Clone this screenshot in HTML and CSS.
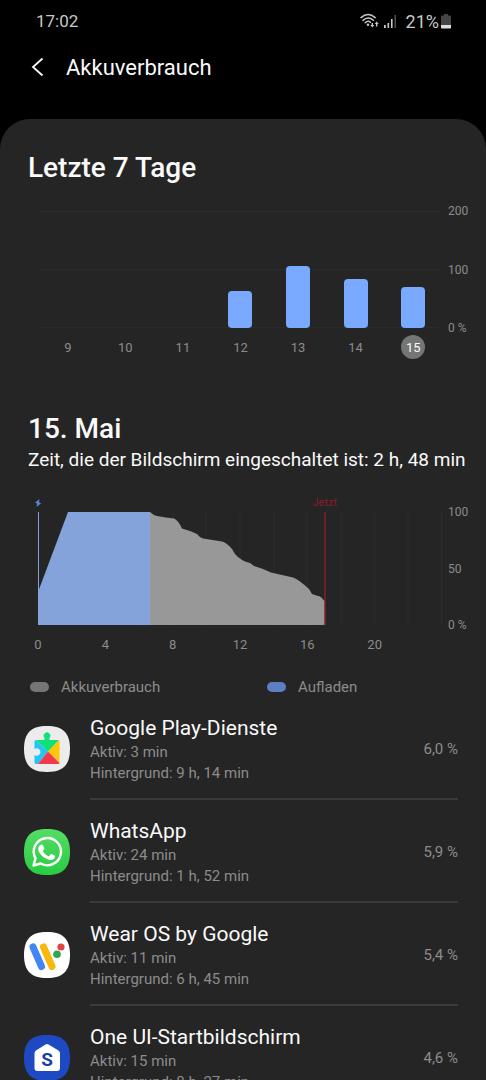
FILE: index.html
```html
<!DOCTYPE html>
<html lang="de">
<head>
<meta charset="utf-8">
<meta name="viewport" content="width=device-width, initial-scale=1">
<title>Akkuverbrauch</title>
<link rel="stylesheet" href="styles.css">
</head>
<body>
<div class="screen">
  <div class="status">
    <span class="time">17:02</span>
    <div class="status-icons">
      <svg class="wifi" viewBox="0 0 20 16" aria-hidden="true">
        <g fill="none" stroke="#c8c8c8" stroke-width="1.5" stroke-linecap="round">
          <path d="M1 4.600Q8-1.500 15.200 4.600"/>
          <path d="M3 7.400Q8 2.700 13.400 7.300"/>
          <path d="M5.200 9.700Q8 7 10.500 9.200"/>
        </g>
        <circle cx="8" cy="11.800" r="1.200" fill="#c8c8c8"/>
        <path d="M11.600 10h1.400v2h1.300l-2 2.500-2-2.500h1.300zM16 13.500v-2.500h-1.300l2-2.500 2 2.500h-1.300v2.500z" fill="#c8c8c8"/>
      </svg>
      <svg class="signal" viewBox="0 0 14 15" aria-hidden="true">
        <path d="M1 11h1.800v3H1zM4.500 9h1.600v5H4.500zM8 5h1.600v9H8z" fill="#c8c8c8"/>
        <path d="M11.500 1H13v13h-1.500z" fill="#505050"/>
      </svg>
      <span class="charge">21%</span>
      <svg class="battery" viewBox="0 0 10 15" aria-hidden="true">
        <path d="M3 0h4v1.500h2q1 0 1 1V11H0V2.500q0-1 1-1h2z" fill="#454545"/>
        <path d="M0 11h10v2.500q0 1-1 1H1q-1 0-1-1z" fill="#dedede"/>
      </svg>
    </div>
  </div>
  <header class="header">
    <button class="back" type="button" aria-label="Zurück">
      <svg viewBox="0 0 14 20" aria-hidden="true"><path d="M11.500 1.500L2 10l9.500 8.500" fill="none" stroke="#fafafa" stroke-width="1.800"/></svg>
    </button>
    <h1>Akkuverbrauch</h1>
  </header>

  <main class="panel">
    <section class="week">
      <h2>Letzte 7 Tage</h2>
      <div class="chart">
        <div class="plot week-plot">
          <div class="col"></div>
          <div class="col"></div>
          <div class="col"></div>
          <div class="col"><div class="bar" style="height:32%"></div></div>
          <div class="col"><div class="bar" style="height:53%"></div></div>
          <div class="col"><div class="bar" style="height:42%"></div></div>
          <div class="col"><div class="bar" style="height:35%"></div></div>
        </div>
        <div class="scale"><span>200</span><span>100</span><span>0 %</span></div>
        <div class="days">
          <button type="button">9</button>
          <button type="button">10</button>
          <button type="button">11</button>
          <button type="button">12</button>
          <button type="button">13</button>
          <button type="button">14</button>
          <button type="button" class="selected">15</button>
        </div>
      </div>
    </section>

    <section class="day">
      <h2>15. Mai</h2>
      <p>Zeit, die der Bildschirm eingeschaltet ist: 2 h, 48 min</p>
      <div class="chart day-chart">
        <div class="plot day-plot">
          <svg class="bolt" viewBox="0 0 8 10" aria-hidden="true"><path d="M5.500 1L1 4.700l2.200.8L2.500 9 7.200 5.200 5 4.500z" fill="#5b87d6"/></svg>
          <span class="now" style="left:71%">Jetzt</span>
          <svg class="area" viewBox="0 0 404 113" preserveAspectRatio="none" aria-hidden="true">
            <path d="M0 80L30 0H112V113H0z" fill="#83a3da"/>
            <path d="M112 0Q115 3 119 4L128 5.500L136 6.500Q140 8 144 16.500L152 19L159 22Q162 26 165 26.500L184 29.500Q188 30 194 37L197 42Q203 49 212 51L216 54L225 57L233 60.500L255 65.500Q260 67 271 77L274 82L280 84Q283 84 285 87.500L287 89V113H112z" fill="#989898"/>
            <path d="M101 0V113M135 0V113M168 0V113M202 0V113M236 0V113M269 0V113M303 0V113M337 0V113M370 0V113M403.500 0V113" stroke="#fff" stroke-opacity=".03"/>
            <path d="M.5 0V113" stroke="#83a3da"/>
            <path d="M287 0V113" stroke="#8a1c2a" stroke-width="1.500"/>
          </svg>
        </div>
        <div class="scale"><span>100</span><span>50</span><span>0 %</span></div>
        <div class="hours"><span>0</span><span>4</span><span>8</span><span>12</span><span>16</span><span>20</span></div>
      </div>
      <div class="legend">
        <span class="key usage">Akkuverbrauch</span>
        <span class="key charging">Aufladen</span>
      </div>
    </section>

    <ul class="apps">
      <li>
        <svg class="icon" viewBox="0 0 46 46" aria-hidden="true">
          <path d="M23 0C39 0 46 7 46 23S39 46 23 46 0 39 0 23 7 0 23 0z" fill="#ececec"/>
          <path d="M12 14L24 25.500 14 38h-2q-1.500 0-1.500-1.500V29a3.700 3.700 0 1 0 0-6v-7.500Q10.500 14 12 14z" fill="#22c5f4"/>
          <path d="M12 14h8.500v-2a3.300 3.300 0 1 1 5 0v2H35L24 25.500z" fill="#0fe07a"/>
          <path d="M35 14q.5 0 .5 1.500v21L24 25.500z" fill="#ffc60a"/>
          <path d="M24 25.500L35.500 37q-.3 1-1.500 1H14z" fill="#f4384c"/>
        </svg>
        <div class="row"><div class="info"><h3>Google Play-Dienste</h3><p>Aktiv: 3 min</p><p>Hintergrund: 9 h, 14 min</p></div><span class="share">6,0 %</span></div>
      </li>
      <li>
        <svg class="icon" viewBox="0 0 46 46" aria-hidden="true">
          <defs><linearGradient id="wa" x2="0" y2="1"><stop stop-color="#55dc65"/><stop offset="1" stop-color="#28cc43"/></linearGradient></defs>
          <path d="M23 0C39 0 46 7 46 23S39 46 23 46 0 39 0 23 7 0 23 0z" fill="url(#wa)"/>
          <path d="M9.500 36.500l2-7.200a13.600 13.600 0 1 1 5.200 5.200z" fill="none" stroke="#fff" stroke-width="2.400" stroke-linejoin="round"/>
          <path d="M18 15.500q.7 0 1 .8l1.300 3q.2.700-.3 1.300l-1 1.300q-.3.400 0 .9 1.900 3 5.200 4.400.6.200 1-.2l1.400-1.700q.4-.5 1-.2l3 1.500q.7.300.6 1-.3 2.400-2.600 3.200-1.800.600-4-.1-6.800-2.200-9.600-7.600-1.700-3.600.4-6.300 1.200-1.300 2.600-1.300z" fill="#fff"/>
        </svg>
        <div class="row"><div class="info"><h3>WhatsApp</h3><p>Aktiv: 24 min</p><p>Hintergrund: 1 h, 52 min</p></div><span class="share">5,9 %</span></div>
      </li>
      <li>
        <svg class="icon" viewBox="0 0 46 46" aria-hidden="true">
          <path d="M23 0C39 0 46 7 46 23S39 46 23 46 0 39 0 23 7 0 23 0z" fill="#fff"/>
          <g fill="none" stroke-width="7" stroke-linecap="round"><path d="M19.500 15L28 34.500" stroke="#f8b90a"/><path d="M9 15l8.500 19.500" stroke="#4285f4"/></g>
          <circle cx="37" cy="15" r="3.600" fill="#df453c"/><circle cx="33" cy="22.300" r="3.800" fill="#30a552"/>
        </svg>
        <div class="row"><div class="info"><h3>Wear OS by Google</h3><p>Aktiv: 11 min</p><p>Hintergrund: 6 h, 45 min</p></div><span class="share">5,4 %</span></div>
      </li>
      <li>
        <svg class="icon" viewBox="0 0 46 46" aria-hidden="true">
          <path d="M23 0C39 0 46 7 46 23S39 46 23 46 0 39 0 23 7 0 23 0z" fill="#1d49c3"/>
          <path d="M21.500 9.600q1.500-1 3 0l10 6q1.500 1 1.500 3V33q0 3-3 3H13.500q-3 0-3-3V18.600q0-2 1.500-3z" fill="#fff"/>
          <text class="initial" x="23" y="30.500" text-anchor="middle">S</text>
        </svg>
        <div class="row"><div class="info"><h3>One UI-Startbildschirm</h3><p>Aktiv: 15 min</p><p>Hintergrund: 8 h, 27 min</p></div><span class="share">4,6 %</span></div>
      </li>
    </ul>
  </main>
</div>
</body>
</html>
```
FILE: styles.css
```css
* { box-sizing: border-box; margin: 0; padding: 0; }
body { background: #000; color: #fafafa; font-family: Roboto, sans-serif; }
button { border: 0; background: none; color: inherit; font: inherit; cursor: pointer; }
svg { display: block; flex: none; }

.screen { display: flex; flex-direction: column; height: 100vh; overflow: hidden; }
.status { flex: none; display: flex; justify-content: space-between; align-items: center; height: 42px; padding: 0 35px 0 36px; font-size: 18px; color: #c8c8c8; }
.time { font-size: 17px; }
.status-icons { display: flex; align-items: center; }
.wifi { width: 20px; height: 16px; margin-right: 3px; }
.signal { width: 14px; height: 15px; margin-right: 9px; }
.charge { margin-right: 2px; }
.battery { width: 10px; height: 15px; }

.header { flex: none; display: flex; align-items: center; gap: 21px; height: 50px; margin-bottom: 27px; padding-left: 31px; }
.header h1 { font-size: 22px; font-weight: 400; }
.back svg { width: 14px; height: 20px; }

.panel { flex: 1; min-height: 0; overflow: hidden; background: #252525; border-radius: 30px 30px 0 0; }
h2 { font-size: 28px; line-height: 34px; font-weight: 500; }
.week { padding: 32px 0 0 28px; }
.day { padding: 53px 0 0 28px; }
.day > p { margin-top: 2px; font-size: 19px; line-height: 24px; white-space: nowrap; }

.chart { display: grid; grid-template-columns: 1fr 38px; column-gap: 6px; margin: 19px 0 0 11px; font-size: 12px; color: #8c8c8c; }
.day-chart { margin: 33px 0 0 10px; }
.plot { margin: 7px 0; }
.scale { display: flex; flex-direction: column; justify-content: space-between; line-height: 14px; }
.week-plot { display: grid; grid-template-columns: repeat(7, 1fr); height: 117px; background: repeating-linear-gradient(#2b2b2b 0 1px, transparent 1px 58px); }
.col { display: flex; justify-content: center; align-items: flex-end; min-height: 0; }
.bar { width: 24px; border-radius: 4px; background: #79aaff; }
.days { display: grid; grid-template-columns: repeat(7, 1fr); justify-items: center; font-size: 13px; }
.days button { width: 24px; height: 24px; border-radius: 50%; text-align: center; }
.days .selected { background: #757575; color: #fafafa; }

.day-plot { position: relative; }
.area { width: 100%; height: 113px; }
.bolt { position: absolute; left: -4px; bottom: 100%; width: 8px; height: 10px; margin-bottom: 4px; }
.now { position: absolute; bottom: 100%; margin-bottom: 3px; transform: translateX(-50%); font-size: 11px; line-height: 13px; color: #8a1c2a; }
.hours { display: grid; grid-template-columns: repeat(6, 1fr); padding-top: 5px; font-size: 13px; line-height: 16px; }
.hours span { width: 24px; margin-left: -12px; text-align: center; }

.legend { display: grid; grid-template-columns: 237px 1fr; margin-top: 24px; padding-left: 2px; font-size: 15px; line-height: 20px; color: #8c8c8c; }
.key { display: flex; align-items: center; gap: 12px; }
.key::before { content: ""; width: 19px; height: 10px; border-radius: 5px; background: #757575; }
.charging::before { background: #5b7fc0; }

.apps { list-style: none; padding: 0 28px 0 24px; }
.apps li { display: flex; align-items: center; gap: 20px; }
.icon { width: 46px; height: 46px; }
.initial { font: 700 19px Roboto, sans-serif; fill: #1a3fa8; }
.row { flex: 1; display: flex; align-items: center; justify-content: space-between; padding: 17px 0 14px; border-bottom: 2px solid #3b3b3b; }
.row h3 { font-size: 21px; line-height: 28px; font-weight: 400; }
.row p, .share { font-size: 15px; line-height: 21px; color: #8c8c8c; }
```
